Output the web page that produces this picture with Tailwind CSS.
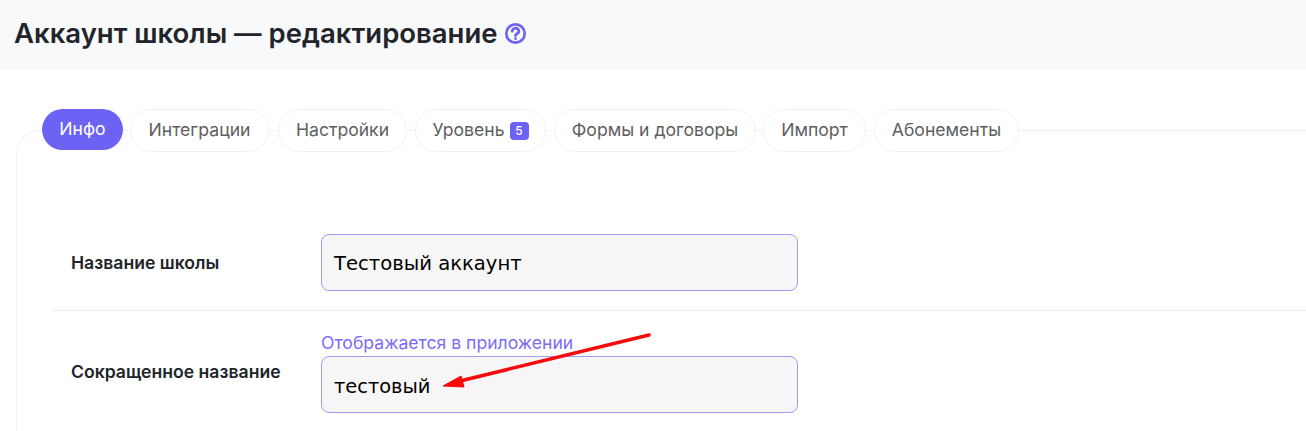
<!DOCTYPE html>
<html lang="ru">
<head>
  <meta charset="UTF-8" />
  <title>Аккаунт школы</title>
  <script src="https://cdn.jsdelivr.net/npm/@tailwindcss/browser@4"></script>
</head>
<body class="relative bg-white h-[431px] overflow-hidden font-['Inter',sans-serif]">

  <!-- Header -->
  <div class="h-[70px] bg-[#f8f9fb] flex items-center pl-[14px] pb-[3px] gap-[7px]">
    <h1 class="text-[27.5px] font-semibold text-[#212529] leading-none">Аккаунт школы — редактирование</h1>
    <svg class="w-[23px] h-[23px] -ml-[1px]" viewBox="0 0 24 24" fill="none" stroke="#6c63f0" stroke-width="2.8" stroke-linecap="round" stroke-linejoin="round">
      <circle cx="12" cy="12" r="9.6"/>
      <path d="M8.6 9.6a3.4 3.1 0 1 1 5 2.7c-1 .5-1.6 1-1.6 2"/>
      <path d="M12 17.4v.1"/>
    </svg>
  </div>

  <!-- Card -->
  <div class="mt-[60px] ml-[16px] border-t border-l border-[#eef1f7] rounded-tl-[24px] h-[301px]">

    <!-- Tabs -->
    <div class="-mt-[22px] ml-[25px] flex items-start text-[17.6px] text-[#5e5e5e]">
      <div class="h-[41px] w-[81px] rounded-full bg-[#6c63f5] text-white flex items-center justify-center">Инфо</div>
      <div class="ml-[7px] h-[43px] w-[139px] rounded-full bg-white border border-[#eef1f7] flex items-center justify-center">Интеграции</div>
      <div class="ml-[9px] h-[43px] w-[129px] rounded-full bg-white border border-[#eef1f7] flex items-center justify-center">Настройки</div>
      <div class="ml-[8px] h-[43px] w-[131px] rounded-full bg-white border border-[#eef1f7] flex items-center justify-center gap-[5px]">
        Уровень
        <span class="w-[19px] h-[18px] rounded-[4px] bg-[#6c63f5] text-white text-[12px] font-medium flex items-center justify-center">5</span>
      </div>
      <div class="ml-[8px] h-[43px] w-[202px] rounded-full bg-white border border-[#eef1f7] flex items-center justify-center">Формы и договоры</div>
      <div class="ml-[7px] h-[43px] w-[103px] rounded-full bg-white border border-[#eef1f7] flex items-center justify-center">Импорт</div>
      <div class="ml-[8px] h-[43px] w-[145px] rounded-full bg-white border border-[#eef1f7] flex items-center justify-center">Абонементы</div>
    </div>

    <!-- Form -->
    <div class="mt-[82px] ml-[35px]">
      <div class="flex items-center h-[77px] pb-[20px] border-b border-[#e9ecef]">
        <label class="w-[269px] pl-[19px] pt-[2px] text-[17.6px] font-semibold text-[#212529]">Название школы</label>
        <div class="w-[477px] h-[57px] rounded-[8px] border border-[#a29bf7] bg-[#f6f6f6] flex items-center px-[12px] pt-[4px] font-['DejaVu_Sans',sans-serif] text-[19.6px] text-black">Тестовый аккаунт</div>
      </div>
      <div class="flex mt-[23px]">
        <label class="w-[269px] pl-[19px] pt-[25px] text-[17.6px] font-semibold text-[#212529]">Сокращенное название</label>
        <div>
          <div class="text-[17.6px] leading-[20px] text-[#7b6cf6] h-[23px] -mt-[1px]">Отображается в приложении</div>
          <div class="w-[477px] h-[57px] rounded-[8px] border border-[#a29bf7] bg-[#f6f6f6] flex items-center px-[12px] pt-[4px] font-['DejaVu_Sans',sans-serif] text-[19.4px] text-black">тестовый</div>
        </div>
      </div>
    </div>
  </div>

  <!-- Red arrow annotation -->
  <svg class="absolute left-0 top-0 pointer-events-none" width="1306" height="431" fill="none">
    <path d="M649 335 L460 381" stroke="#f60a0a" stroke-width="3.5" stroke-linecap="round"/>
    <path d="M443 386 L461 376 L464 387 Z" fill="#f60a0a" stroke="#f60a0a" stroke-width="1"/>
  </svg>
</body>
</html>
